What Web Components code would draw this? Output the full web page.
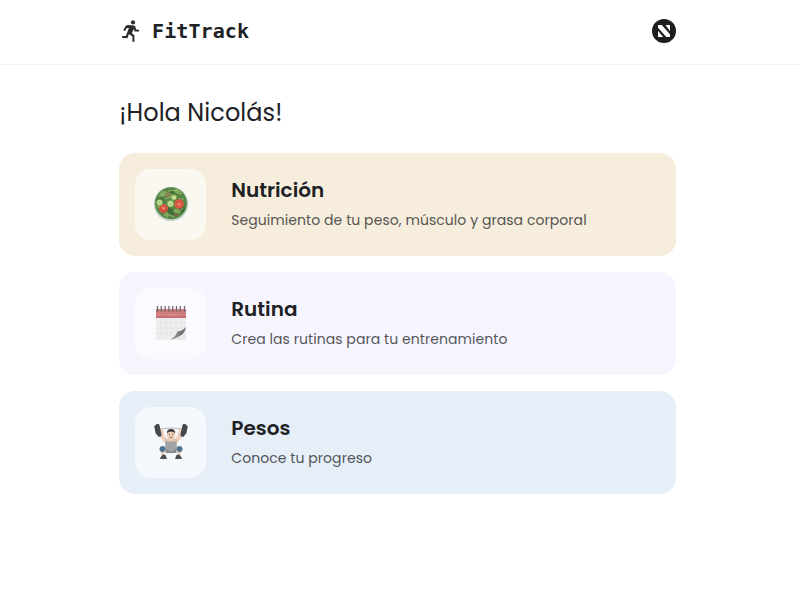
<!DOCTYPE html>
<html lang="es"><head><meta charset="utf-8"><title>FitTrack</title>
<style>
html,body{margin:0;background:#fff}
body{font-family:Poppins,Inter,"Open Sans",sans-serif;color:#202124;height:600px;overflow:hidden}
</style></head><body>
<fit-app></fit-app>
<script>
const define = (name, html) => {
  const t = document.createElement('template');
  t.innerHTML = html;
  customElements.define(name, class extends HTMLElement {
    connectedCallback() {
      if (this.shadowRoot) return;
      this.attachShadow({mode: 'open'}).append(t.content.cloneNode(true));
    }
  });
};

define('runner-icon', `<style>:host{display:block;width:24px;height:24px}svg{display:block}</style>
<svg width="24" height="24" viewBox="0 0 24 24" fill="#2a2b2d"><circle cx="14" cy="3.400" r="2.100"/><path d="M9.800 6l5 .5c1 .1 1.500.9 1.700 1.800l.6 2.200 3 .2v1.900l-4.400-.2-.9-2.400-2 4 2.600 2.500v6.200h-2v-5.100l-3.400-2.600-1.600 4.200-5.200-.2v-2l3.700-.1 3-8-2.200.2-1.600 3-1.800-.9 2-3.600c.4-.8 1-1.500 3.500-1.600z"/></svg>`);

define('user-badge', `<style>:host{display:block}svg{display:block}</style>
<svg width="24" height="24" viewBox="0 0 24 24"><circle cx="12" cy="12" r="12" fill="#1d1e20"/><g fill="#fff"><path d="M6 6.100h3.700L18 15.200V17.900h-3.700L6 8.800z"/><path d="M13.500 6.100H18v6.200zM6 11.700l5.200 6.200H6z"/></g></svg>`);

define('salad-icon', `<style>:host,svg{display:block}</style>
<svg width="36" height="36" viewBox="0 0 36 36">
<circle cx="18" cy="18" r="17.300" fill="#c3d4ca"/><circle cx="18" cy="17.200" r="16" fill="#588647"/>
<g fill="#3f6b37"><path d="M3 14q6-6 8 2q-5 5-8-2M16 6q7-6 12 2q-5 3-12-2M13 22q6-2 9 6q-6 3-9-6M25 20q7-2 7 4q-4 6-7-4M20 15l4-5 3 8z"/></g>
<g fill="#7fa95a"><path d="M6 9q4-8 8-2q-2 6-8 2M20 4q8-3 9 4q-6 2-9-4M5 18q-3 5 3 4zM20 25q4-5 7 0-2 5-7 0M15 10q5-4 7 1-2 5-7-1M10 29q7-6 5 3z"/></g>
<g fill="none" stroke="#9dbd78" stroke-width=".8"><path d="M6 11l7-4M15 5l10-1M12 13l9-3M25 13l6 0M14 28l7 3M25 27l5-5"/></g>
<path d="M12 8q4-4 7 1l-5 3z" fill="#8b8453"/><circle cx="23" cy="29" r="1.700" fill="#8f5d46"/>
<circle cx="10.500" cy="22.500" r="4.500" fill="#d55140"/><circle cx="26" cy="18" r="4.800" fill="#d95745"/>
<path d="M8.500 22q2-2 4 0l-2 2zM24 18q2-2 4 0l-2 2z" fill="#ef8b72"/>
<g fill="#c9df99" stroke="#76a94d"><circle cx="6.600" cy="16.500" r="3.100"/><circle cx="17.500" cy="17.800" r="3.300"/><circle cx="21" cy="11.500" r="2.700"/></g>
<g fill="#86b35b"><circle cx="6.600" cy="16.500" r=".8"/><circle cx="17.500" cy="17.800" r=".9"/></g></svg>`);

define('calendar-icon', `<style>:host,svg{display:block}</style>
<svg width="36" height="36" viewBox="0 0 36 36">
<path d="M3 4h30v20.500Q27 28 19 35H3z" fill="#eee"/><path d="M3 4h30v9H3z" fill="#cf7c7c"/><path d="M3 11.500h30v1.500H3z" fill="#c46b6e"/>
<path d="M5 9.300h5M13 10h15" stroke="#dc9797" stroke-width=".8"/>
<path d="M3 18h29M3 23h25M3 28h18M8 13v21M13 13v21M18 13v20M23 13v16M28 13v12" stroke="#e2e2e2" stroke-width=".8"/>
<path d="M33 24v11H18.500z" fill="#e9e9e9"/><path d="M17 35q6-3 7.500-8.500 4 0 8.500-4.500-1 7-7.500 9.500-3 1.500-8.500 3.500z" fill="#727272"/><path d="M21 33q4-2 5-5" stroke="#9a9a9a" fill="none"/>
<path d="M4.500 1v6M8.300 1v6M12.100 1v6M15.900 1v6M19.700 1v6M23.500 1v6M27.300 1v6M31.500 1v6" stroke="#6f6a70" stroke-width="1.300"/></svg>`);

define('lifter-icon', `<style>:host,svg{display:block}</style>
<svg width="36" height="36" viewBox="0 0 36 36">
<path d="M4 5Q18 3 32 5" fill="none" stroke="#aeb2b5" stroke-width=".9"/>
<path d="M8 6l1.500 7 4.500 5M28 6l-1.500 7-4.500 5" fill="none" stroke="#ecd0bc" stroke-width="4.300" stroke-linecap="round" stroke-linejoin="round"/>
<path d="M12.500 15.500h11L24 29H12z" fill="#a0a3a6"/><path d="M13.500 14q4.500 4 9 0v3.500h-9z" fill="#e8c6ae"/>
<path d="M13 27l-4-1 1 6M23 27l4-1-1 6" fill="none" stroke="#e8ccb9" stroke-width="3"/>
<circle cx="9.500" cy="25" r="3" fill="#50748f"/><circle cx="26.500" cy="25" r="3" fill="#50748f"/><path d="M13 25l5 3 5-3v4H13z" fill="#858a8e"/>
<path d="M7.500 33.500q2-4 5-2.500L14 35H7zM28.500 33.500q-2-4-5-2.500L22 35h7z" fill="#4b4d52"/>
<ellipse cx="18" cy="11" rx="4" ry="5" fill="#edcdb5"/><path d="M14 9.500q-.5-4.500 4-4.500t4 4.500l-1.800-1.700h-4.400z" fill="#3e3836"/><path d="M15.500 10.300h1.500M19 10.300h1.500M16.500 13.200h3" stroke="#8a6355" stroke-width=".8"/>
<g fill="#44474b"><rect x="3.400" y="0" width="4.200" height="13" rx="2" transform="rotate(-12 5 6.500)"/><rect x="28.400" y="0" width="4.200" height="13" rx="2" transform="rotate(12 31 6.500)"/><rect x="2" y="1.500" width="2" height="9" rx="1" transform="rotate(-12 3 6)"/><rect x="32" y="1.500" width="2" height="9" rx="1" transform="rotate(12 33 6)"/></g></svg>`);

define('app-header', `<style>
:host{display:block;box-sizing:border-box;height:65px;border-bottom:1px solid #f0f0f0;padding:0 124px 0 119px}
.bar{height:62px;display:flex;align-items:center;justify-content:space-between}
.brand{display:flex;align-items:center;gap:9px}
.name{font:bold 20px/24px "DejaVu Sans Mono",monospace;letter-spacing:.1px}
</style><div class="bar"><div class="brand"><runner-icon></runner-icon><span class="name"><slot></slot></span></div><user-badge></user-badge></div>`);

define('menu-card', `<style>
:host{display:flex;align-items:center;box-sizing:border-box;height:103px;padding:0 16px;border-radius:16px;gap:25px;background:var(--card)}
.tile{width:71px;height:71px;border-radius:16px;background:rgba(255,255,255,.6);display:flex;align-items:flex-start;justify-content:center;flex:none;padding-top:16.500px;box-sizing:border-box}
.copy{display:flex;flex-direction:column;gap:4px;padding-bottom:3px}
::slotted([slot=title]){font-size:20px;line-height:30px;font-weight:600}
::slotted([slot=text]){font-size:14px;line-height:22px;letter-spacing:.06px;opacity:.75}
</style><div class="tile"><slot name="icon"></slot></div><div class="copy"><slot name="title"></slot><slot name="text"></slot></div>`);

define('fit-app', `<style>
:host{display:block}
main{padding:30px 124px 0 119.300px}
.hello{font-size:24px;line-height:36px;letter-spacing:.07px;margin-bottom:22.300px}
.list{display:flex;flex-direction:column;gap:16px}
</style>
<app-header>FitTrack</app-header>
<main><div class="hello">¡Hola Nicolás!</div>
<div class="list">
<menu-card style="--card:#f6eddd"><salad-icon slot="icon"></salad-icon><span slot="title">Nutrición</span><span slot="text">Seguimiento de tu peso, músculo y grasa corporal</span></menu-card>
<menu-card style="--card:#f6f5fe"><calendar-icon slot="icon"></calendar-icon><span slot="title">Rutina</span><span slot="text">Crea las rutinas para tu entrenamiento</span></menu-card>
<menu-card style="--card:#e6eef8"><lifter-icon slot="icon"></lifter-icon><span slot="title">Pesos</span><span slot="text">Conoce tu progreso</span></menu-card>
</div></main>`);
</script></body></html>
